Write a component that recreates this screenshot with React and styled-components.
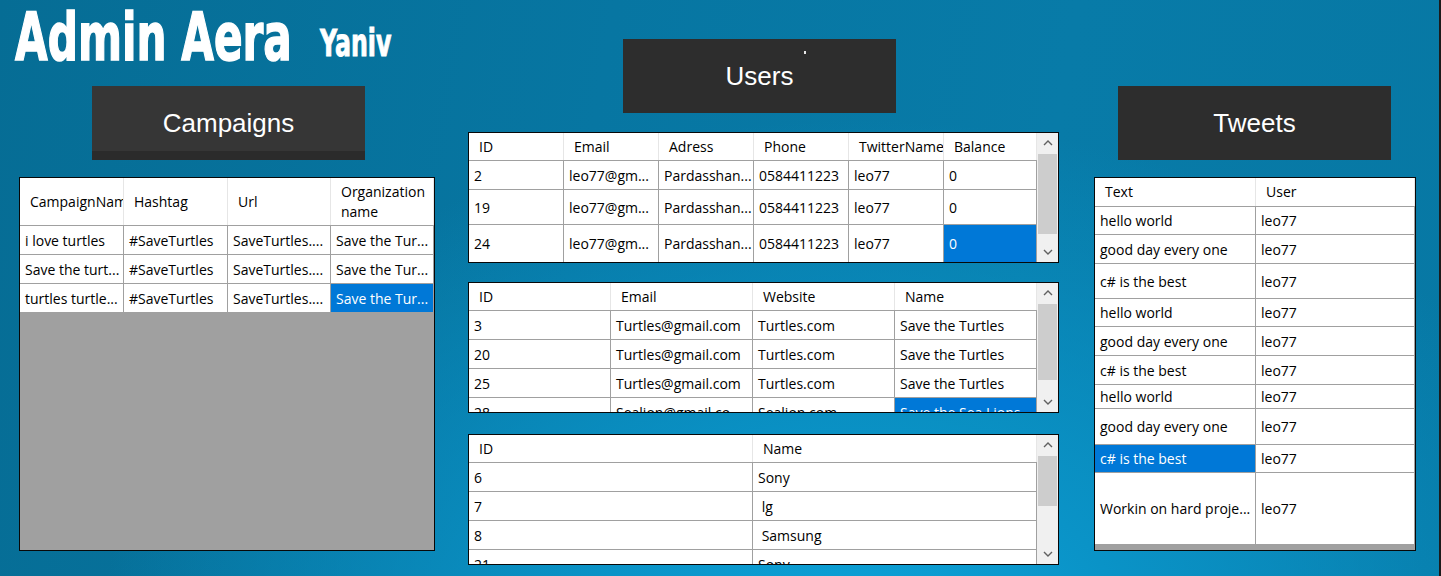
import styled, { createGlobalStyle } from 'styled-components';

const GlobalStyle = createGlobalStyle`
  html, body {
    margin: 0;
    padding: 0;
  }
  body {
    font-family: "Open Sans", "Noto Sans", sans-serif;
  }
  * {
    box-sizing: border-box;
  }
`;

const Screen = styled.div`
  width: 1441px;
  height: 576px;
  overflow: hidden;
  display: grid;
  grid-template-columns: 416px 591px 1fr;
  column-gap: 33px;
  align-items: start;
  padding-left: 19px;
  border-right: 2px solid #1b1b1b;
  background:
    radial-gradient(ellipse 760px 520px at 860px 640px, #0da3d9 0%, #0a93c7 35%, rgba(8, 122, 168, 0) 100%),
    linear-gradient(100deg, #066d95 0%, #0776a2 40%, #087ba8 70%, #0778a4 100%);
`;

const Column = styled.section`
  display: flex;
  flex-direction: column;
  width: ${(p) => p.$w}px;
  padding-top: ${(p) => p.$top || 0}px;
  margin-left: ${(p) => p.$left || 0}px;
  gap: ${(p) => p.$gap}px;
`;

const TitleRow = styled.header`
  display: flex;
  align-items: flex-start;
  height: 69px;
  margin-left: -4px;
  color: #fff;
  white-space: nowrap;
  font-family: "DejaVu Sans", "Liberation Sans", sans-serif;
  font-weight: bold;
  -webkit-text-stroke: 1.6px #fff;
  transform: scaleX(0.64);
  transform-origin: left top;
`;

const Title = styled.h1`
  margin: 5px 0 0;
  font-size: 66px;
  line-height: 66px;
  font-weight: bold;
`;

const UserName = styled.span`
  margin: 25px 0 0 44px;
  font-size: 37px;
  line-height: 37px;
  -webkit-text-stroke: 1px #fff;
`;

const PanelButton = styled.div`
  position: relative;
  width: 273px;
  height: 74px;
  margin-left: ${(p) => p.$left}px;
  background: ${(p) => (p.$strip ? '#363636' : '#2d2d2d')};
  box-shadow: ${(p) => (p.$strip ? 'inset 0 -9px 0 #2b2b2b' : 'none')};
  display: flex;
  align-items: center;
  justify-content: center;
  color: #fff;
  font-family: "Liberation Sans", Arial, sans-serif;
  font-size: 26px;
`;

const Tick = styled.span`
  position: absolute;
  left: 181px;
  top: 12px;
  width: 2px;
  height: 3px;
  background: #e8e8e8;
`;

const Table = styled.div`
  display: flex;
  height: ${(p) => p.$h}px;
  margin-top: ${(p) => p.$mt || 0}px;
  border: 1px solid #080808;
  background: #a0a0a0;
  overflow: hidden;
  font-size: 14px;
  color: #000;
`;

const Body = styled.div`
  flex: 1;
  min-width: 0;
  display: flex;
  flex-direction: column;
`;

const HeadRow = styled.div`
  flex: none;
  display: flex;
  height: ${(p) => p.$h}px;
  background: #fff;
  border-bottom: 1px solid #a0a0a0;
`;

const HeadCell = styled.div`
  flex: none;
  width: ${(p) => p.$w}px;
  display: flex;
  align-items: center;
  padding-left: 10px;
  border-right: 1px solid #e6e6e6;
  line-height: 20px;
  overflow: hidden;
`;

const Row = styled.div`
  flex: none;
  display: flex;
  height: ${(p) => p.$h}px;
`;

const Cell = styled.div`
  flex: none;
  width: ${(p) => p.$w}px;
  display: flex;
  align-items: center;
  padding-left: 5px;
  border-right: 1px solid #a0a0a0;
  border-bottom: 1px solid #a0a0a0;
  background: ${(p) => (p.$selected ? '#0078d7' : '#fff')};
  color: ${(p) => (p.$selected ? '#fff' : '#000')};
  white-space: pre;
  overflow: hidden;
`;

const ScrollBar = styled.div`
  flex: none;
  width: 21px;
  display: flex;
  flex-direction: column;
  background: #f0f0f0;
`;

const Arrow = styled.div`
  flex: none;
  height: 20px;
  display: flex;
  align-items: center;
  justify-content: center;
  margin-top: ${(p) => (p.$down ? 'auto' : '0')};
`;

const Thumb = styled.div`
  flex: none;
  height: ${(p) => p.$h}px;
  margin: 1px 1px 0 1px;
  background: #cdcdcd;
`;

function Chevron({ down }) {
  return (
    <svg width="10" height="6" viewBox="0 0 10 6">
      <path
        d={down ? 'M1 1 L5 5 L9 1' : 'M1 5 L5 1 L9 5'}
        fill="none"
        stroke="#606060"
        strokeWidth="1.4"
      />
    </svg>
  );
}

function DataGrid({ height, mt, cols, heads, headH, rows, thumb }) {
  return (
    <Table $h={height} $mt={mt}>
      <Body>
        <HeadRow $h={headH}>
          {heads.map((h, i) => (
            <HeadCell key={i} $w={cols[i]}>
              {h}
            </HeadCell>
          ))}
        </HeadRow>
        {rows.map((r, ri) => (
          <Row key={ri} $h={r.h}>
            {r.cells.map((c, ci) => (
              <Cell key={ci} $w={cols[ci]} $selected={r.sel === ci}>
                {c}
              </Cell>
            ))}
          </Row>
        ))}
      </Body>
      {thumb && (
        <ScrollBar>
          <Arrow>
            <Chevron />
          </Arrow>
          <Thumb $h={thumb} />
          <Arrow $down>
            <Chevron down />
          </Arrow>
        </ScrollBar>
      )}
    </Table>
  );
}

const campaignRows = [
  { h: 29, cells: ['i love turtles', '#SaveTurtles', 'SaveTurtles....', 'Save the Tur...'] },
  { h: 29, cells: ['Save the turt...', '#SaveTurtles', 'SaveTurtles....', 'Save the Tur...'] },
  { h: 29, cells: ['turtles turtle...', '#SaveTurtles', 'SaveTurtles....', 'Save the Tur...'], sel: 3 },
];

const userRows = [
  { h: 29, cells: ['2', 'leo77@gm...', 'Pardasshan...', '0584411223', 'leo77', '0'] },
  { h: 35, cells: ['19', 'leo77@gm...', 'Pardasshan...', '0584411223', 'leo77', '0'] },
  { h: 38, cells: ['24', 'leo77@gm...', 'Pardasshan...', '0584411223', 'leo77', '0'], sel: 5 },
];

const orgRows = [
  { h: 29, cells: ['3', 'Turtles@gmail.com', 'Turtles.com', 'Save the Turtles'] },
  { h: 29, cells: ['20', 'Turtles@gmail.com', 'Turtles.com', 'Save the Turtles'] },
  { h: 29, cells: ['25', 'Turtles@gmail.com', 'Turtles.com', 'Save the Turtles'] },
  { h: 29, cells: ['28', 'Sealion@gmail.co', 'Sealion.com', 'Save the Sea Lions'], sel: 3 },
];

const companyRows = [
  { h: 29, cells: ['6', 'Sony'] },
  { h: 29, cells: ['7', ' lg'] },
  { h: 29, cells: ['8', ' Samsung'] },
  { h: 29, cells: ['21', 'Sony'] },
];

const tweetRows = [
  { h: 28, cells: ['hello world', 'leo77'] },
  { h: 29, cells: ['good day every one', 'leo77'] },
  { h: 35, cells: ['c# is the best', 'leo77'] },
  { h: 28, cells: ['hello world', 'leo77'] },
  { h: 29, cells: ['good day every one', 'leo77'] },
  { h: 29, cells: ['c# is the best', 'leo77'] },
  { h: 24, cells: ['hello world', 'leo77'] },
  { h: 36, cells: ['good day every one', 'leo77'] },
  { h: 28, cells: ['c# is the best', 'leo77'], sel: 0 },
  { h: 72, cells: ['Workin on hard proje...', 'leo77'] },
];

export default function App() {
  return (
    <>
      <GlobalStyle />
      <Screen>
        <Column $w={416} $gap={17}>
          <TitleRow>
            <Title>Admin Aera</Title>
            <UserName>Yaniv</UserName>
          </TitleRow>
          <PanelButton $left={73} $strip>
            Campaigns
          </PanelButton>
          <DataGrid
            height={374}
            cols={[104, 104, 103, 103]}
            heads={['CampaignName', 'Hashtag', 'Url', 'Organization name']}
            headH={48}
            rows={campaignRows}
          />
        </Column>

        <Column $w={591} $top={39} $gap={19}>
          <PanelButton $left={155}>
            Users
            <Tick />
          </PanelButton>
          <DataGrid
            height={131}
            cols={[95, 95, 95, 95, 95, 93]}
            heads={['ID', 'Email', 'Adress', 'Phone', 'TwitterName', 'Balance']}
            headH={28}
            rows={userRows}
            thumb={80}
          />
          <DataGrid
            height={131}
            cols={[142, 142, 142, 142]}
            heads={['ID', 'Email', 'Website', 'Name']}
            headH={28}
            rows={orgRows}
            thumb={76}
          />
          <DataGrid
            height={131}
            mt={2}
            cols={[284, 284]}
            heads={['ID', 'Name']}
            headH={28}
            rows={companyRows}
            thumb={50}
          />
        </Column>

        <Column $w={322} $left={2} $top={86} $gap={17}>
          <PanelButton $left={24}>Tweets</PanelButton>
          <DataGrid
            height={374}
            cols={[161, 159]}
            heads={['Text', 'User']}
            headH={29}
            rows={tweetRows}
          />
        </Column>
      </Screen>
    </>
  );
}
